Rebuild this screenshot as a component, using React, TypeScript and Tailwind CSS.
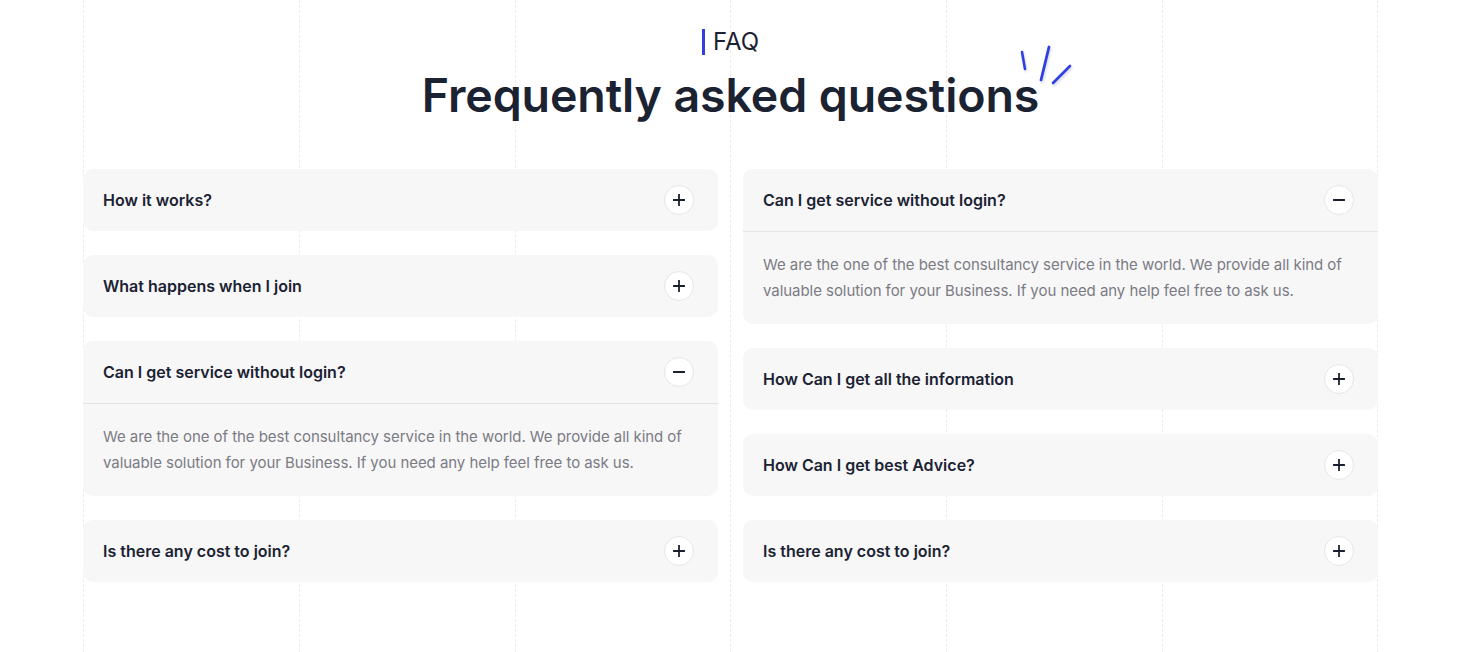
import React from "react";

type Item = { q: string; open?: boolean };

const left: Item[] = [
  { q: "How it works?" },
  { q: "What happens when I join" },
  { q: "Can I get service without login?", open: true },
  { q: "Is there any cost to join?" },
];
const right: Item[] = [
  { q: "Can I get service without login?", open: true },
  { q: "How Can I get all the information" },
  { q: "How Can I get best Advice?" },
  { q: "Is there any cost to join?" },
];

const answer =
  "We are the one of the best consultancy service in the world. We provide all kind of valuable solution for your Business. If you need any help feel free to ask us.";

function Toggle({ open }: { open?: boolean }) {
  return (
    <span className="flex h-[30px] w-[30px] items-center justify-center rounded-full border border-[#e6e6e8] bg-white">
      <svg width="12" height="12" viewBox="0 0 12 12" fill="none">
        <path d="M0.5 6h11" stroke="#1a2030" strokeWidth="1.8" strokeLinecap="round" />
        {!open && <path d="M6 0.5v11" stroke="#1a2030" strokeWidth="1.8" strokeLinecap="round" />}
      </svg>
    </span>
  );
}

function Card({ item }: { item: Item }) {
  return (
    <div className="rounded-[10px] bg-[#f7f7f8]">
      <div className="flex h-[62px] items-center justify-between pl-5 pr-6">
        <span className="text-[16px] font-semibold text-[#1b2232]">{item.q}</span>
        <Toggle open={item.open} />
      </div>
      {item.open && (
        <div className="border-t border-[#e4e4e7] px-5 pt-5 pb-5">
          <p className="text-[15px] leading-[26px] tracking-[-0.05px] text-[#7b7b84]">{answer}</p>
        </div>
      )}
    </div>
  );
}

export default function App() {
  return (
    <div
      className="relative min-h-[652px] w-full overflow-hidden bg-white"
      style={{ fontFamily: "Inter, 'Noto Sans', sans-serif" }}
    >
      <div className="pointer-events-none absolute inset-y-0 left-[83px] grid w-[1295px] grid-cols-6">
        {[0, 1, 2, 3, 4, 5].map((i) => (
          <div
            key={i}
            className={
              i === 5
                ? "border-x border-dashed border-[#ececee]"
                : "border-l border-dashed border-[#ececee]"
            }
          />
        ))}
      </div>

      <div className="relative ml-[83px] w-[1295px] pt-[28px]">
        <div className="flex flex-col items-center">
          <div className="flex items-center gap-[8px]">
            <span className="h-[26px] w-[3px] bg-[#2f3fe0]" />
            <span className="text-[24px] leading-[28px] text-[#1b2232]">FAQ</span>
          </div>
          <div className="relative mt-[10px]">
            <h2 className="text-[46.5px] font-semibold leading-[58px] tracking-[-0.1px] text-[#1b2232]">
              Frequently asked questions
            </h2>
            <svg
              className="absolute -right-[38px] -top-[25px]"
              width="60"
              height="50"
              viewBox="0 0 60 50"
              fill="none"
              style={{ filter: "drop-shadow(1px 2px 1px rgba(40,50,120,0.18))" }}
            >
              <path d="M5 11 L8 28" stroke="#2f3fe0" strokeWidth="2.6" strokeLinecap="round" />
              <path d="M32 6 L24 39" stroke="#2f3fe0" strokeWidth="2.8" strokeLinecap="round" />
              <path d="M53 25 L36 42" stroke="#2f3fe0" strokeWidth="2.6" strokeLinecap="round" />
            </svg>
          </div>
        </div>

        <div className="mt-[45px] grid grid-cols-2 gap-x-[25px]">
          <div className="flex flex-col gap-6">
            {left.map((it, i) => (
              <Card key={i} item={it} />
            ))}
          </div>
          <div className="flex flex-col gap-6">
            {right.map((it, i) => (
              <Card key={i} item={it} />
            ))}
          </div>
        </div>
      </div>
    </div>
  );
}
